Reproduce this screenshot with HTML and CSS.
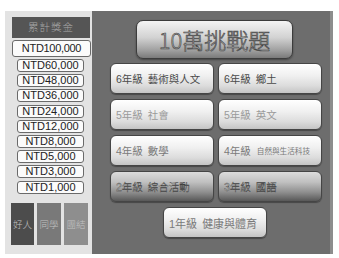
FILE: index.html
```html
<!DOCTYPE html>
<html lang="zh-Hant">
<head>
<meta charset="utf-8">
<title>10萬挑戰題</title>
<link rel="stylesheet" href="styles.css">
</head>
<body>
<div class="app">
  <aside class="side">
    <div class="side-head">累計獎金</div>
    <div class="prize prize-top">NTD100,000</div>
    <div class="prize-list">
      <div class="prize">NTD60,000</div>
      <div class="prize">NTD48,000</div>
      <div class="prize">NTD36,000</div>
      <div class="prize">NTD24,000</div>
      <div class="prize">NTD12,000</div>
      <div class="prize">NTD8,000</div>
      <div class="prize">NTD5,000</div>
      <div class="prize">NTD3,000</div>
      <div class="prize">NTD1,000</div>
    </div>
    <div class="helps">
      <div class="help help-1">好人</div>
      <div class="help help-2">同學</div>
      <div class="help help-3">團結</div>
    </div>
  </aside>
  <main class="board">
    <div class="title">10萬挑戰題</div>
    <div class="grid">
      <div class="btn t-dark">6年級<span class="subj">藝術與人文</span></div>
      <div class="btn t-dark">6年級<span class="subj">鄉土</span></div>
      <div class="btn t-light">5年級<span class="subj">社會</span></div>
      <div class="btn t-light">5年級<span class="subj">英文</span></div>
      <div class="btn t-mid">4年級<span class="subj">數學</span></div>
      <div class="btn t-mid">4年級<span class="subj subj-small">自然與生活科技</span></div>
      <div class="btn btn-dark">2年級<span class="subj">綜合活動</span></div>
      <div class="btn btn-dark">3年級<span class="subj">國語</span></div>
    </div>
    <div class="btn t-mid single">1年級<span class="subj">健康與體育</span></div>
  </main>
</div>
</body>
</html>
```
FILE: styles.css
```css
* { box-sizing: border-box; }
html, body { margin: 0; padding: 0; background: #ffffff; }
body {
  font-family: "Liberation Sans", "Noto Sans CJK TC", sans-serif;
  width: 339px;
  height: 258px;
  overflow: hidden;
}
.app {
  display: flex;
  margin: 11px 0 0 5px;
  height: 243px;
}
.side {
  width: 87px;
  height: 243px;
  background: #e3e3e3;
  padding: 6px 2px 9px 7px;
  display: flex;
  flex-direction: column;
}
.side-head {
  width: 78px;
  height: 21px;
  background: #555555;
  color: #a8a8a8;
  font-size: 10.5px;
  font-weight: 300;
  line-height: 21px;
  text-align: center;
  letter-spacing: 1px;
}
.prize {
  background: #fbfbfb;
  border: 1px solid #6a6a6a;
  border-radius: 3px;
  color: #222;
  font-size: 11px;
  text-align: center;
  height: 13px;
  line-height: 11px;
  width: 67px;
  margin-left: 5px;
}
.prize-top {
  width: 79px;
  margin-left: 0;
  margin-top: 1.5px;
  height: 17px;
  line-height: 15px;
  letter-spacing: -0.3px;
}
.prize-list {
  display: flex;
  flex-direction: column;
  gap: 2.2px;
  margin-top: 2.5px;
}
.helps {
  display: flex;
  gap: 3px;
  margin-top: auto;
  margin-left: -1px;
}
.help {
  height: 42px;
  width: 24px;
  color: #c2c2c2;
  font-size: 9.5px;
  font-weight: 300;
  display: flex;
  align-items: center;
  justify-content: center;
}
.help-1 { width: 23px; background: #4c4c4c; }
.help-2 { background: #797979; }
.help-3 { background: #8e8e8e; }

.board {
  width: 241px;
  height: 243px;
  background: #6d6d6d;
  border-right: 3px solid #8d8d8d;
  padding: 9px 8px 0 18px;
  display: flex;
  flex-direction: column;
  align-items: flex-start;
}
.title {
  margin-left: 26px;
  width: 157px;
  height: 39px;
  border: 1px solid #3c3c3c;
  border-radius: 7px;
  background: linear-gradient(#f4f4f4, #d2d2d2 45%, #9e9e9e 80%, #7a7a7a);
  box-shadow: 0 1px 2px rgba(0,0,0,0.4);
  color: #b8b8b8;
  font-family: "Noto Sans CJK TC", sans-serif;
  font-weight: 300;
  -webkit-text-stroke: 0.6px #444;
  font-size: 22px;
  line-height: 37px;
  text-align: center;
}
.grid {
  margin-top: 4px;
  display: grid;
  grid-template-columns: 104px 104px;
  column-gap: 4px;
  row-gap: 5px;
}
.btn {
  height: 31px;
  border: 1px solid #454545;
  border-radius: 6px;
  background: linear-gradient(#ffffff, #f0f0f0 40%, #dcdcdc 75%, #c4c4c4);
  box-shadow: 0 1px 1px rgba(0,0,0,0.35);
  font-size: 10.5px;
  padding-left: 5px;
  display: flex;
  align-items: center;
  white-space: nowrap;
}
.subj { margin-left: 5px; }
.subj-small { font-size: 7.6px; margin-left: 6px; }
.t-dark { color: #4a4a4a; }
.t-light { color: #9a9a9a; }
.t-mid { color: #7a7a7a; }
.btn-dark {
  background: linear-gradient(#dcdcdc, #c0c0c0 35%, #8e8e8e 70%, #585858);
  color: #c4c4c4;
  font-weight: 300;
  -webkit-text-stroke: 0.35px #3e3e3e;
}
.single {
  margin-top: 5px;
  margin-left: 53px;
  width: 104px;
  font-size: 11px;
}
```
